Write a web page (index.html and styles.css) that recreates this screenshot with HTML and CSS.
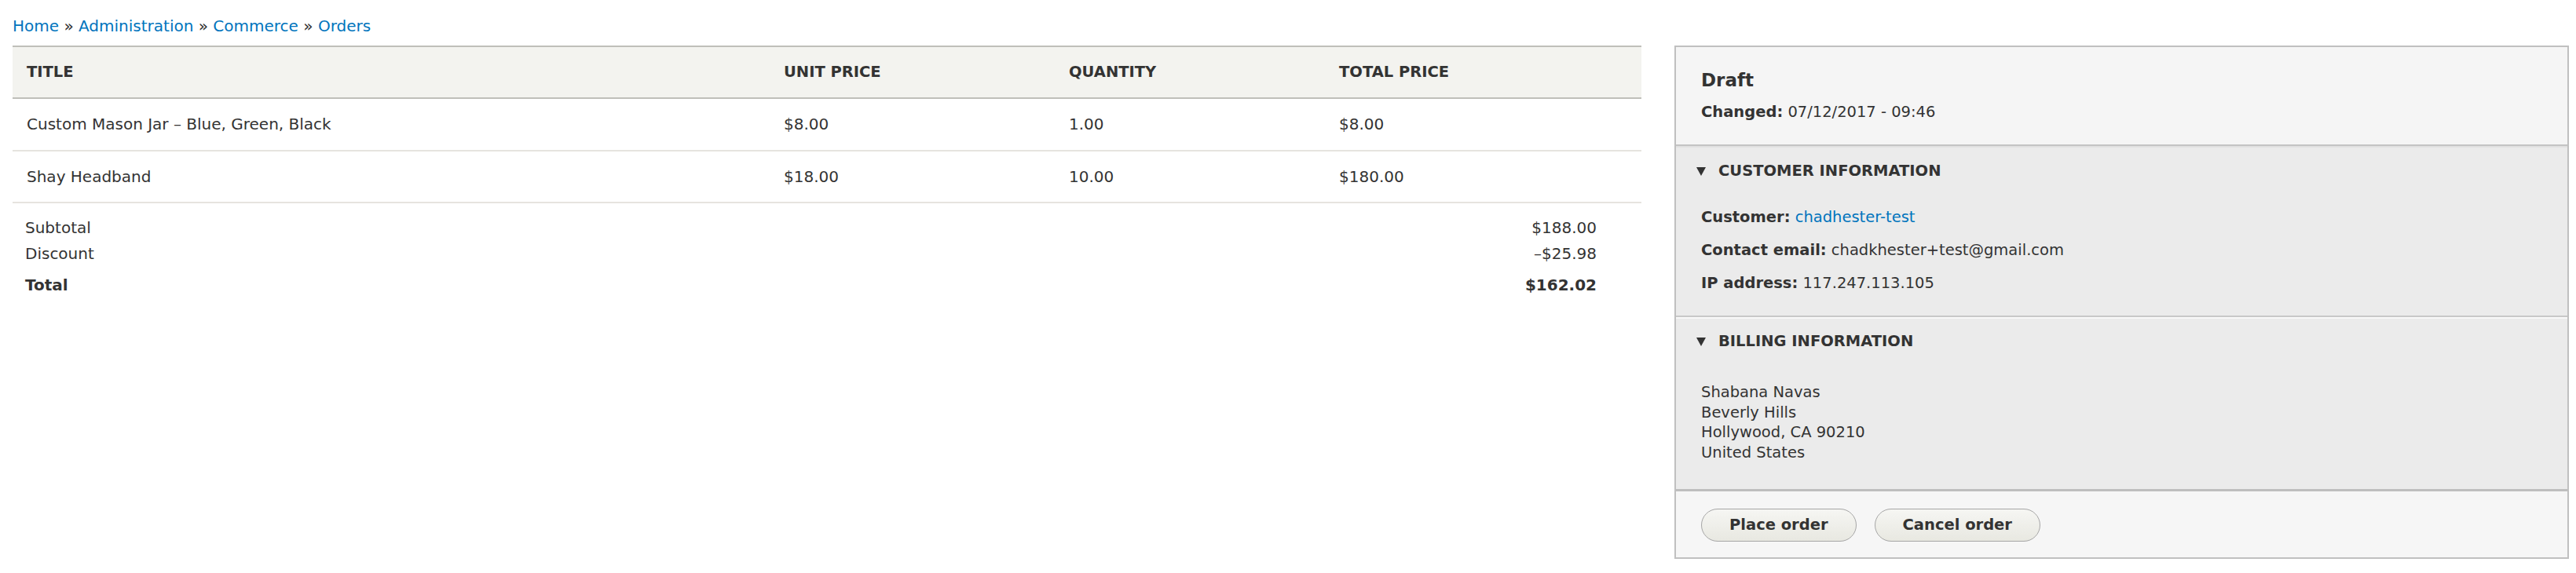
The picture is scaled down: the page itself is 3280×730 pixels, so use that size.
FILE: index.html
```html
<!DOCTYPE html>
<html lang="en">
<head>
<meta charset="utf-8">
<title>Order</title>
<link rel="stylesheet" href="styles.css">
</head>
<body>
<div class="page">
  <nav class="breadcrumb">
    <a href="#">Home</a> <span class="sep">»</span> <a href="#">Administration</a> <span class="sep">»</span> <a href="#">Commerce</a> <span class="sep">»</span> <a href="#">Orders</a>
  </nav>
  <div class="layout">
    <main class="main">
      <table class="order-items">
        <colgroup>
          <col class="col-title">
          <col class="col-unit">
          <col class="col-qty">
          <col class="col-total">
        </colgroup>
        <thead>
          <tr><th>Title</th><th>Unit price</th><th>Quantity</th><th>Total price</th></tr>
        </thead>
        <tbody>
          <tr><td>Custom Mason Jar – Blue, Green, Black</td><td>$8.00</td><td>1.00</td><td>$8.00</td></tr>
          <tr><td>Shay Headband</td><td>$18.00</td><td>10.00</td><td>$180.00</td></tr>
        </tbody>
      </table>
      <div class="totals">
        <div class="totals-line"><span>Subtotal</span><span>$188.00</span></div>
        <div class="totals-line"><span>Discount</span><span>–$25.98</span></div>
        <div class="totals-line totals-grand"><span>Total</span><span>$162.02</span></div>
      </div>
    </main>
    <aside class="sidebar">
      <div class="meta-header">
        <h3 class="meta-title">Draft</h3>
        <div class="meta-changed"><span class="label">Changed:</span> 07/12/2017 - 09:46</div>
      </div>
      <section class="details details-customer">
        <div class="summary"><span class="caret"></span>Customer information</div>
        <div class="field"><span class="label">Customer:</span> <a href="#">chadhester-test</a></div>
        <div class="field"><span class="label">Contact email:</span> chadkhester+test@gmail.com</div>
        <div class="field"><span class="label">IP address:</span> 117.247.113.105</div>
      </section>
      <section class="details details-billing">
        <div class="summary"><span class="caret"></span>Billing information</div>
        <address class="address">Shabana Navas<br>Beverly Hills<br>Hollywood, CA 90210<br>United States</address>
      </section>
      <div class="actions">
        <button class="button" type="button">Place order</button>
        <button class="button" type="button">Cancel order</button>
      </div>
    </aside>
  </div>
</div>
</body>
</html>
```
FILE: styles.css
```css
* { box-sizing: border-box; }

body {
  margin: 0;
  background: #fff;
  color: #333;
  font-family: "DejaVu Sans", "Liberation Sans", sans-serif;
  font-size: 20px;
}

.page {
  padding: 20px 9px 0 16px;
}

.breadcrumb {
  font-size: 20px;
  line-height: 26px;
  margin: 0 0 12px;
}
.breadcrumb a { color: #0074bd; text-decoration: none; }
.breadcrumb .sep { color: #333; }

.layout {
  display: grid;
  grid-template-columns: 2074px 1139px;
  column-gap: 42px;
  align-items: start;
}

.order-items {
  width: 100%;
  border-collapse: collapse;
  table-layout: fixed;
}
.col-title { width: 964px; }
.col-unit { width: 363px; }
.col-qty { width: 344px; }
.col-total { width: 403px; }

.order-items th {
  background: #f3f3ef;
  border-top: 2px solid #bfbfba;
  border-bottom: 2px solid #bfbfba;
  text-align: left;
  font-size: 19.5px;
  font-weight: bold;
  text-transform: uppercase;
  line-height: 26px;
  padding: 19px 18px;
}
.order-items td {
  font-size: 20px;
  line-height: 25px;
  padding: 20px 18px 19.5px;
  border-bottom: 2px solid #e6e4df;
}

.totals {
  padding: 15px 57px 0 16px;
}
.totals-line {
  display: flex;
  justify-content: space-between;
  line-height: 33px;
  font-size: 20px;
}
.totals-grand {
  font-weight: bold;
  margin-top: 7px;
}

.sidebar {
  border: 2px solid #c0c0c0;
  background: #f5f5f5;
}

.meta-header {
  padding: 27px 32px 28px;
  border-bottom: 2px solid #c4c4c4;
}
.meta-title {
  margin: 0;
  font-size: 23px;
  line-height: 30px;
  font-weight: bold;
}
.meta-changed {
  margin-top: 13px;
  font-size: 19.5px;
  line-height: 26px;
}
.label { font-weight: bold; }

.details {
  background: #ebebeb;
  box-shadow: inset 0 3px 3px -2px rgba(0, 0, 0, 0.08);
}
.details-customer {
  padding: 19px 32px 28px;
}
.details-billing {
  padding: 18px 32px 33px;
  border-top: 2px solid #c8c8c8;
  box-shadow: inset 0 2px 0 #f8f8f8;
}

.summary {
  display: flex;
  align-items: center;
  margin-left: -6px;
  font-size: 19.5px;
  line-height: 26px;
  font-weight: bold;
  text-transform: uppercase;
}
.caret {
  width: 0;
  height: 0;
  border-left: 6.5px solid transparent;
  border-right: 6.5px solid transparent;
  border-top: 11px solid #333;
  margin-right: 16px;
}

.field {
  font-size: 19.5px;
  line-height: 26px;
  margin-top: 16px;
}
.summary + .field { margin-top: 33px; }
.field a { color: #0074bd; text-decoration: none; }

.address {
  margin-top: 39px;
  font-style: normal;
  font-size: 19.5px;
  line-height: 25.7px;
}

.actions {
  display: flex;
  gap: 23px;
  padding: 22px 32px 20px;
  border-top: 3px solid #bebebe;
  background: #f6f6f6;
}
.button {
  height: 42px;
  padding: 0 35px;
  font-family: "DejaVu Sans", "Liberation Sans", sans-serif;
  font-size: 19.5px;
  font-weight: bold;
  color: #333;
  border: 1px solid #a6a6a6;
  border-radius: 21px;
  background: linear-gradient(#f6f6f3, #e8e8e1);
}
```
